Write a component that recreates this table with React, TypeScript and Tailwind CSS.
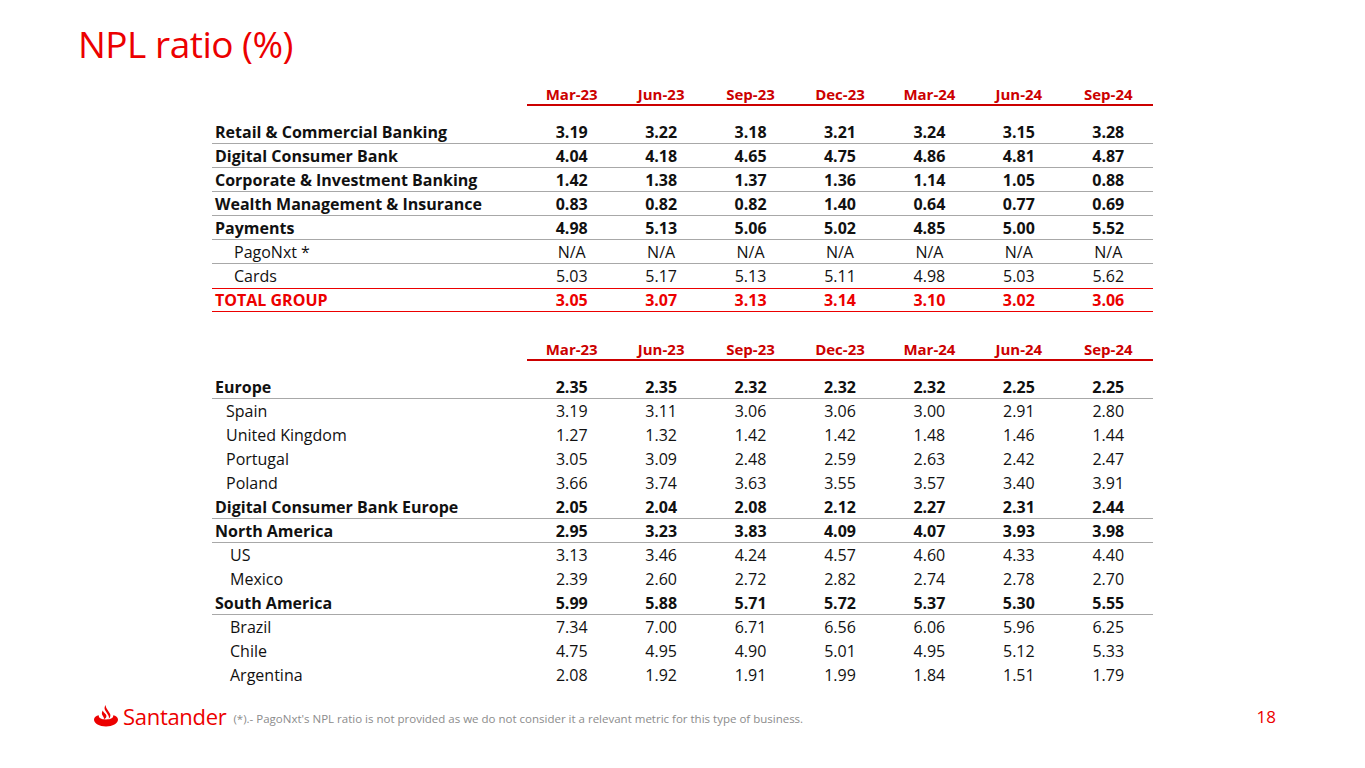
import React from 'react';

const cols = ['Mar-23', 'Jun-23', 'Sep-23', 'Dec-23', 'Mar-24', 'Jun-24', 'Sep-24'];

type Row = {
  label: string;
  values: string[];
  kind: 'bold' | 'sub' | 'total';
  indent?: string;
  line?: boolean;
};

const segments: Row[] = [
  { label: 'Retail & Commercial Banking', values: ['3.19', '3.22', '3.18', '3.21', '3.24', '3.15', '3.28'], kind: 'bold', line: true },
  { label: 'Digital Consumer Bank', values: ['4.04', '4.18', '4.65', '4.75', '4.86', '4.81', '4.87'], kind: 'bold', line: true },
  { label: 'Corporate & Investment Banking', values: ['1.42', '1.38', '1.37', '1.36', '1.14', '1.05', '0.88'], kind: 'bold', line: true },
  { label: 'Wealth Management & Insurance', values: ['0.83', '0.82', '0.82', '1.40', '0.64', '0.77', '0.69'], kind: 'bold', line: true },
  { label: 'Payments', values: ['4.98', '5.13', '5.06', '5.02', '4.85', '5.00', '5.52'], kind: 'bold', line: true },
  { label: 'PagoNxt *', values: ['N/A', 'N/A', 'N/A', 'N/A', 'N/A', 'N/A', 'N/A'], kind: 'sub', indent: 'pl-[22px]', line: true },
  { label: 'Cards', values: ['5.03', '5.17', '5.13', '5.11', '4.98', '5.03', '5.62'], kind: 'sub', indent: 'pl-[22px]' },
  { label: 'TOTAL GROUP', values: ['3.05', '3.07', '3.13', '3.14', '3.10', '3.02', '3.06'], kind: 'total' },
];

const regions: Row[] = [
  { label: 'Europe', values: ['2.35', '2.35', '2.32', '2.32', '2.32', '2.25', '2.25'], kind: 'bold', line: true },
  { label: 'Spain', values: ['3.19', '3.11', '3.06', '3.06', '3.00', '2.91', '2.80'], kind: 'sub', indent: 'pl-[14px]' },
  { label: 'United Kingdom', values: ['1.27', '1.32', '1.42', '1.42', '1.48', '1.46', '1.44'], kind: 'sub', indent: 'pl-[14px]' },
  { label: 'Portugal', values: ['3.05', '3.09', '2.48', '2.59', '2.63', '2.42', '2.47'], kind: 'sub', indent: 'pl-[14px]' },
  { label: 'Poland', values: ['3.66', '3.74', '3.63', '3.55', '3.57', '3.40', '3.91'], kind: 'sub', indent: 'pl-[14px]' },
  { label: 'Digital Consumer Bank Europe', values: ['2.05', '2.04', '2.08', '2.12', '2.27', '2.31', '2.44'], kind: 'bold', line: true },
  { label: 'North America', values: ['2.95', '3.23', '3.83', '4.09', '4.07', '3.93', '3.98'], kind: 'bold', line: true },
  { label: 'US', values: ['3.13', '3.46', '4.24', '4.57', '4.60', '4.33', '4.40'], kind: 'sub', indent: 'pl-[18px]' },
  { label: 'Mexico', values: ['2.39', '2.60', '2.72', '2.82', '2.74', '2.78', '2.70'], kind: 'sub', indent: 'pl-[18px]' },
  { label: 'South America', values: ['5.99', '5.88', '5.71', '5.72', '5.37', '5.30', '5.55'], kind: 'bold', line: true },
  { label: 'Brazil', values: ['7.34', '7.00', '6.71', '6.56', '6.06', '5.96', '6.25'], kind: 'sub', indent: 'pl-[18px]' },
  { label: 'Chile', values: ['4.75', '4.95', '4.90', '5.01', '4.95', '5.12', '5.33'], kind: 'sub', indent: 'pl-[18px]' },
  { label: 'Argentina', values: ['2.08', '1.92', '1.91', '1.99', '1.84', '1.51', '1.79'], kind: 'sub', indent: 'pl-[18px]' },
];

function HeaderRow() {
  return (
    <div className="flex h-[22px]">
      <div className="w-[315px]" />
      <div className="flex border-b-2 border-[#cc0000]">
        {cols.map((c) => (
          <div key={c} className="w-[89.43px] text-center text-[15px] leading-[20px] font-bold text-[#cc0000]">
            {c}
          </div>
        ))}
      </div>
    </div>
  );
}

function TableRow({ row }: { row: Row }) {
  let rowCls = 'text-[#111]';
  if (row.kind === 'total') rowCls = 'border-y-[1.5px] border-[#ec0000] text-[#ec0000] font-bold';
  else if (row.kind === 'bold') rowCls = 'border-b border-[#a8a8a8] text-[#111] font-bold';
  else if (row.line) rowCls = 'border-b border-[#a8a8a8] text-[#111]';
  return (
    <div className={`flex h-[24px] items-center text-[16px] leading-none ${rowCls}`}>
      <div className={`w-[315px] pl-[3px] ${row.indent ?? ''}`}>{row.label}</div>
      {row.values.map((v, i) => (
        <div key={i} className="w-[89.43px] text-center">
          {v}
        </div>
      ))}
    </div>
  );
}

function SantanderLogo() {
  return (
    <div className="flex items-center gap-[4px] text-[#ec0000]">
      <svg width="26" height="24" viewBox="0 0 26 24" fill="#ec0000">
        <path d="M1 15.5C1 19.5 6.5 22.5 13 22.5C19.5 22.5 25 19.5 25 15.5C25 13.3 22.8 11.8 20.2 11.2C20.6 13.6 18 15.4 13 15.4C8 15.4 5.4 13.6 5.8 11.2C3.2 11.8 1 13.3 1 15.5Z" />
        <path d="M12.6 1C12.6 1 10.8 3.6 12 6L15.4 11.6C16.4 13.3 15.7 15 15.7 15C15.7 15 18.4 12.6 17 9.8L13.5 4.2C12.8 3 12.6 1 12.6 1Z" />
        <path d="M9.8 6.5C9.8 6.5 8.2 8.8 9.3 11L10.6 13.2C11.3 14.4 10.8 15.2 10.8 15.2C10.8 15.2 13.6 14.4 13.4 11.8C13.3 10.8 12.4 9.9 11.5 9C10.4 8 9.8 6.5 9.8 6.5Z" />
      </svg>
      <span className="text-[22px] leading-none tracking-[-0.3px]">Santander</span>
    </div>
  );
}

export default function App() {
  return (
    <div
      className="w-[1365px] h-[768px] bg-white overflow-hidden flex flex-col"
      style={{ fontFamily: '"Open Sans", "Liberation Sans", sans-serif' }}
    >
      <h1 className="ml-[78px] mt-[20px] h-[48px] text-[37px] leading-[48px] text-[#ec0000] tracking-[-0.5px]">
        NPL ratio (%)
      </h1>

      <div className="ml-[212px] w-[941px] mt-[16px]">
        <HeaderRow />
        <div className="mt-[14px]">
          {segments.map((r) => (
            <TableRow key={r.label} row={r} />
          ))}
        </div>
        <div className="mt-[27px]">
          <HeaderRow />
        </div>
        <div className="mt-[14px]">
          {regions.map((r) => (
            <TableRow key={r.label} row={r} />
          ))}
        </div>
      </div>

      <div className="mt-[14px] flex h-[30px] items-center pl-[93px] pr-[89px]">
        <SantanderLogo />
        <span className="ml-[7px] mt-[6px] text-[11.5px] text-[#8c8c8c]">
          (*).- PagoNxt's NPL ratio is not provided as we do not consider it a relevant metric for this type of business.
        </span>
        <span className="ml-auto mt-[2px] text-[17px] text-[#ec0000]">18</span>
      </div>
    </div>
  );
}
